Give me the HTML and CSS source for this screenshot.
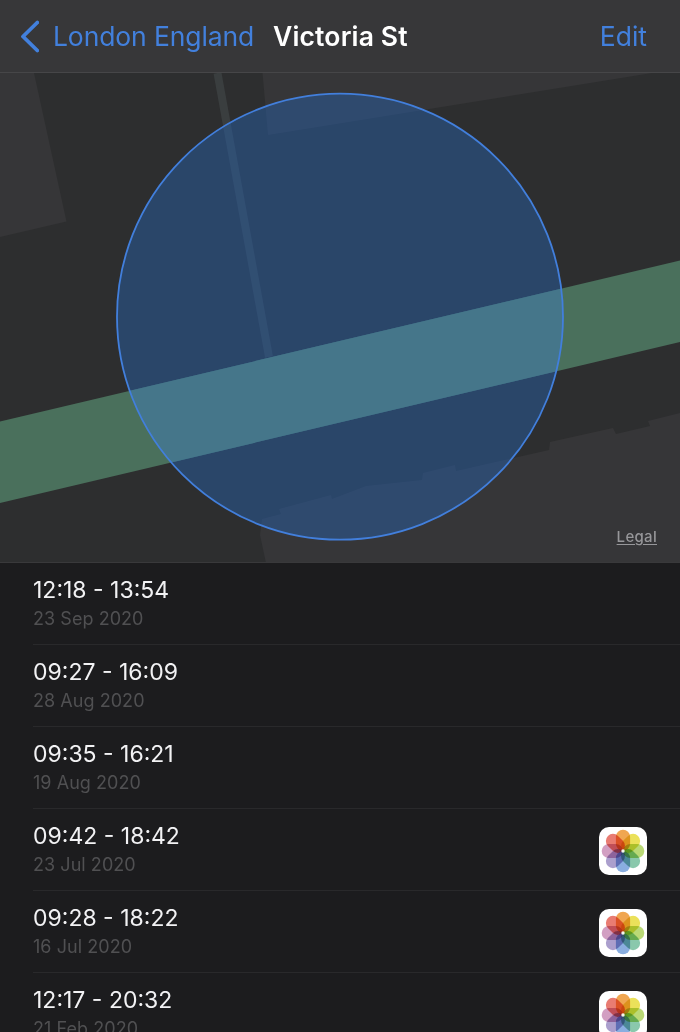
FILE: index.html
```html
<!DOCTYPE html>
<html lang="en">
<head>
<meta charset="utf-8">
<title>Victoria St</title>
<link rel="stylesheet" href="styles.css">
</head>
<body>
<svg class="defs" width="0" height="0" aria-hidden="true">
  <symbol id="photos" viewBox="0 0 48 48">
    <g class="petals">
      <rect x="16.900" y="2.700" width="14.200" height="21.100" rx="7.100" fill="#f0a651"/>
      <rect x="16.900" y="2.700" width="14.200" height="21.100" rx="7.100" fill="#ebe15a" transform="rotate(45 24 24)"/>
      <rect x="16.900" y="2.700" width="14.200" height="21.100" rx="7.100" fill="#bad976" transform="rotate(90 24 24)"/>
      <rect x="16.900" y="2.700" width="14.200" height="21.100" rx="7.100" fill="#8ac8ac" transform="rotate(135 24 24)"/>
      <rect x="16.900" y="2.700" width="14.200" height="21.100" rx="7.100" fill="#8aaee0" transform="rotate(180 24 24)"/>
      <rect x="16.900" y="2.700" width="14.200" height="21.100" rx="7.100" fill="#ab9fcd" transform="rotate(225 24 24)"/>
      <rect x="16.900" y="2.700" width="14.200" height="21.100" rx="7.100" fill="#d29fc2" transform="rotate(270 24 24)"/>
      <rect x="16.900" y="2.700" width="14.200" height="21.100" rx="7.100" fill="#e97c72" transform="rotate(315 24 24)"/>
    </g>
    <circle cx="24" cy="24" r="1.700" fill="#f4f7ee"/>
  </symbol>
</svg>
<div class="screen">
  <header class="nav">
    <a class="back">
      <svg class="chevron" width="20" height="34" viewBox="0 0 20 34"><path d="M18.300 3.500 4 17.500 18.300 31.500"/></svg>
      <span class="back-label">London England</span>
    </a>
    <h1 class="title">Victoria St</h1>
    <a class="edit">Edit</a>
  </header>
  <section class="map">
    <svg class="map-art" width="680" height="489" viewBox="0 73 680 489">
      <clipPath id="radius-clip"><circle cx="340" cy="316.700" r="223"/></clipPath>
      <g class="building">
        <path d="M0 73H34L66.500 221.500 0 237Z"/>
        <path d="M262.500 73H652L268 135Z"/>
        <path d="M260 535 266 563H680V413L648 421 650 426 616 434 613 428 550 442 549 450 456 471 455 465 423 473 422 480 366 486 332 499 331 495 279 509 281 514 262 519Z"/>
      </g>
      <path class="path" d="M217.500 73 269 357"/>
      <path class="road" d="M0 421.500 680 260.500V342L0 503Z"/>
      <circle class="radius" cx="340" cy="316.700" r="223"/>
      <path class="road-inside" clip-path="url(#radius-clip)" d="M0 421.500 680 260.500V342L0 503Z"/>
      <circle class="radius-edge" cx="340" cy="316.700" r="223"/>
    </svg>
    <a class="legal">Legal</a>
  </section>
  <ul class="visits">
    <li class="visit"><div class="info"><span class="time">12:18 - 13:54</span><span class="date">23 Sep 2020</span></div></li>
    <li class="visit"><div class="info"><span class="time">09:27 - 16:09</span><span class="date">28 Aug 2020</span></div></li>
    <li class="visit"><div class="info"><span class="time">09:35 - 16:21</span><span class="date">19 Aug 2020</span></div></li>
    <li class="visit"><div class="info"><span class="time">09:42 - 18:42</span><span class="date">23 Jul 2020</span></div><svg class="photos"><use href="#photos"/></svg></li>
    <li class="visit"><div class="info"><span class="time">09:28 - 18:22</span><span class="date">16 Jul 2020</span></div><svg class="photos"><use href="#photos"/></svg></li>
    <li class="visit"><div class="info"><span class="time">12:17 - 20:32</span><span class="date">21 Feb 2020</span></div><svg class="photos"><use href="#photos"/></svg></li>
  </ul>
</div>
</body>
</html>
```
FILE: styles.css
```css
* { box-sizing: border-box; }
body { margin: 0; background: #1c1c1e; font-family: Inter, "Liberation Sans", sans-serif; }
.defs { display: block; height: 0; }
.screen { width: 680px; height: 1032px; overflow: hidden; display: flex; flex-direction: column; }
.nav {
  flex: none; height: 73px; padding: 0 33px 0 19px;
  display: flex; align-items: center;
  background: #373739; border-bottom: 1px solid #464648;
  font-size: 26.5px; line-height: 32px; white-space: nowrap;
}
.back, .edit { color: #4280dd; }
.back { display: flex; align-items: center; gap: 14px; width: 254px; }
.chevron { flex: none; fill: none; stroke: #4280dd; stroke-width: 3.8; stroke-linecap: round; stroke-linejoin: round; }
.back-label { letter-spacing: -0.12px; }
.title { margin: 0; font-size: 26.5px; font-weight: 600; color: #fff; letter-spacing: 0.15px; }
.edit { margin-left: auto; }
.map { flex: none; height: 490px; position: relative; background: #2d2e2f; border-bottom: 1px solid #39393b; }
.map-art { display: block; }
.building { fill: #363638; }
.path { fill: none; stroke: #3a3e3f; stroke-width: 8; }
.road { fill: #4a705c; }
.radius { fill: rgba(40, 99, 178, .45); }
.road-inside { fill: #45768a; }
.radius-edge { fill: none; stroke: #427fdc; stroke-width: 1.8; }
.legal {
  position: absolute; right: 23px; bottom: 15px;
  font-size: 15px; line-height: 20px; font-weight: 500; letter-spacing: .3px;
  color: #97979a; text-decoration: underline; text-underline-offset: 2px;
}
.visits { list-style: none; margin: 0; padding: 0 0 0 33px; }
.visit {
  height: 82px; padding: 0 33px 0 0;
  display: flex; justify-content: space-between; align-items: flex-start;
  border-bottom: 1px solid #29292b;
}
.info { display: flex; flex-direction: column; padding-top: 12px; }
.time { font-size: 23px; line-height: 30px; color: #f2f2f4; }
.date { font-size: 18px; line-height: 28px; color: #505052; letter-spacing: .05px; }
.photos { width: 48px; height: 48px; margin-top: 18px; border-radius: 10px; background: #fff; }
.petals rect { mix-blend-mode: multiply; }
```
